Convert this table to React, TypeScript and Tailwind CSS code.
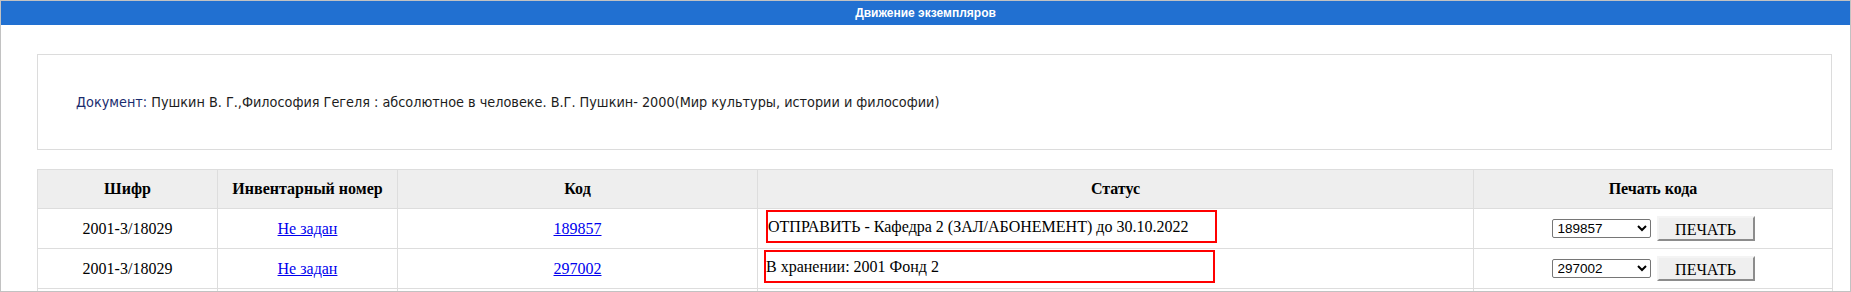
import React from "react";

const rows = [
  {
    shifr: "2001-3/18029",
    inv: "Не задан",
    code: "189857",
    status: "ОТПРАВИТЬ - Кафедра 2 (ЗАЛ/АБОНЕМЕНТ) до 30.10.2022",
    boxClass: "ml-[8px] w-[451px]",
  },
  {
    shifr: "2001-3/18029",
    inv: "Не задан",
    code: "297002",
    status: "В хранении: 2001 Фонд 2",
    boxClass: "ml-[6px] w-[451px]",
  },
];

export default function App() {
  return (
    <div className="w-[1851px] h-[292px] overflow-hidden border border-[#c2c2c2] bg-white">
      {/* title bar */}
      <div className="h-[24px] bg-[#2170d1] flex items-center justify-center text-white text-[12px] font-bold font-['Liberation_Sans',Arial,sans-serif]">
        Движение экземпляров
      </div>

      <div className="pl-[36px] pt-[29px]">
        {/* document box */}
        <div className="w-[1795px] h-[96px] border border-[#dcdcdc] flex items-center pl-[38px] pt-[2px] text-[14.3px] font-['DejaVu_Sans_Condensed','Liberation_Sans',sans-serif] text-[#1c1c1c]">
          <span className="text-[#1a2c6e]">Документ:</span>
          <span>&nbsp;Пушкин В. Г.,Философия Гегеля : абсолютное в человеке. В.Г. Пушкин- 2000(Мир культуры, истории и философии)</span>
        </div>

        {/* table */}
        <table className="mt-[19px] w-[1795px] table-fixed border-collapse text-[16px] text-black font-['Liberation_Serif','Times_New_Roman',serif]">
          <colgroup>
            <col className="w-[180px]" />
            <col className="w-[180px]" />
            <col className="w-[360px]" />
            <col className="w-[716px]" />
            <col className="w-[359px]" />
          </colgroup>
          <thead>
            <tr className="h-[39px] bg-[#eeeeee]">
              <th className="border border-[#dddddd] font-bold">Шифр</th>
              <th className="border border-[#dddddd] font-bold">Инвентарный номер</th>
              <th className="border border-[#dddddd] font-bold">Код</th>
              <th className="border border-[#dddddd] font-bold">Статус</th>
              <th className="border border-[#dddddd] font-bold">Печать кода</th>
            </tr>
          </thead>
          <tbody>
            {rows.map((r, i) => (
              <tr key={i} className="h-[40px]">
                <td className="border border-[#dddddd] text-center">{r.shifr}</td>
                <td className="border border-[#dddddd] text-center">
                  <a href="#" className="text-[#0000ee] underline">{r.inv}</a>
                </td>
                <td className="border border-[#dddddd] text-center">
                  <a href="#" className="text-[#0000ee] underline">{r.code}</a>
                </td>
                <td className="border border-[#dddddd] p-0 pt-[1px] align-top">
                  <div className={`${r.boxClass} h-[33px] border-2 border-[#ff0000] flex items-center`}>
                    {r.status}
                  </div>
                </td>
                <td className="border border-[#dddddd]">
                  <div className="flex items-center justify-center gap-[6px]">
                    <select
                      defaultValue={r.code}
                      className="w-[99px] h-[19px] border border-[#767676] rounded-[2px] bg-white text-[13.5px] pl-[1px] font-['Liberation_Sans',Arial,sans-serif]"
                    >
                      <option value={r.code}>{r.code}</option>
                    </select>
                    <button className="w-[98px] h-[25px] bg-[#efefef] border-2 border-t-[#f4f4f4] border-l-[#f4f4f4] border-r-[#8c8c8c] border-b-[#8c8c8c] text-[16px] font-['Liberation_Serif','Times_New_Roman',serif]">
                      ПЕЧАТЬ
                    </button>
                  </div>
                </td>
              </tr>
            ))}
            <tr className="h-[40px]">
              <td className="border border-[#dddddd]"></td>
              <td className="border border-[#dddddd]"></td>
              <td className="border border-[#dddddd]"></td>
              <td className="border border-[#dddddd]"></td>
              <td className="border border-[#dddddd]"></td>
            </tr>
          </tbody>
        </table>
      </div>
    </div>
  );
}
